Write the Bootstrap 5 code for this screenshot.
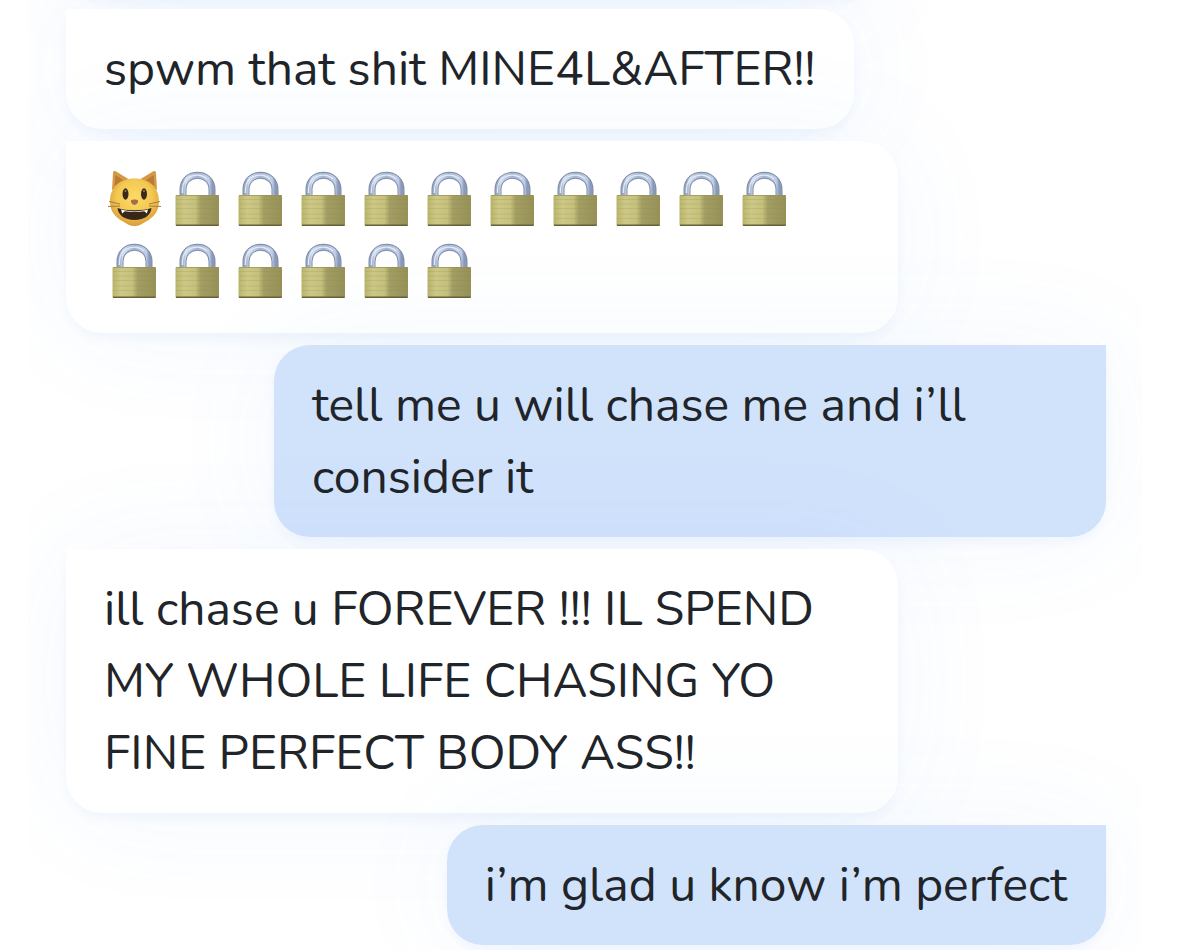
<!DOCTYPE html>
<html lang="en">
<head>
<meta charset="utf-8">
<meta name="viewport" content="width=device-width, initial-scale=1">
<title>Chat</title>
<link href="https://cdn.jsdelivr.net/npm/bootstrap@5.3.0/dist/css/bootstrap.min.css" rel="stylesheet">
<style>
body { background: #fff; color: #212529; font-family: Nunito, Lato, sans-serif; font-size: 48px; line-height: 72px; }
.chat-view { margin: 0 50px 0 28px; padding: 0 36px 0 38px; overflow: hidden; min-height: 100vh; }
.chat-log { gap: 12px; }
.bubble {
  max-width: 80%;
  padding: 24px 39px 24px 38px;
  border-radius: 36px;
  box-shadow: 0 6px 12px rgba(70, 130, 230, .06), 0 0 120px rgba(70, 130, 240, .06);
}
.bubble-in { background: #fff; border-top-left-radius: 0; }
.bubble-out { background: #d1e2fb; border-top-right-radius: 0; }
/* the end of an earlier message, scrolled out of view */
.bubble-past { width: 78%; height: 90px; margin-top: -93px; }
.emoji { width: 63px; height: 72px; flex: none; }
</style>
</head>
<body>
<svg width="0" height="0" class="position-absolute" aria-hidden="true">
  <defs>
    <linearGradient id="brass"><stop offset="0" stop-color="#bab56c"/><stop offset=".2" stop-color="#cdc885"/><stop offset=".46" stop-color="#c5c07c"/><stop offset=".58" stop-color="#a39e63"/><stop offset="1" stop-color="#979157"/></linearGradient>
    <linearGradient id="steel"><stop offset="0" stop-color="#9aa9c6"/><stop offset=".1" stop-color="#d3dff3"/><stop offset=".5" stop-color="#a3b4d3"/><stop offset=".9" stop-color="#c3d1eb"/><stop offset="1" stop-color="#8a9abb"/></linearGradient>
    <radialGradient id="fur" cx=".5" cy=".4" r=".6"><stop offset="0" stop-color="#fbdb68"/><stop offset=".6" stop-color="#f3c952"/><stop offset="1" stop-color="#d99b3a"/></radialGradient>
    <symbol id="lock" viewBox="0 0 63 72">
      <path d="M16 31V24.500C16 5.500 45 5.500 45 24.500V31" fill="none" stroke="#808ca3" stroke-width="7"/>
      <path d="M16 31V24.500C16 5.500 45 5.500 45 24.500V31" fill="none" stroke="url(#steel)" stroke-width="5"/>
      <path d="M15.500 28V24.500C15.500 9 34 7 40 14" fill="none" stroke="#e3ebf9" stroke-width="1.300"/>
      <rect x="8.500" y="30" width="43.500" height="31" rx="1" fill="url(#brass)"/>
      <path d="M9 34.500h42M9 39h42M9 43.500h42M9 49h42M9 53.500h42" stroke="#8d8545" stroke-opacity=".2"/>
      <path d="M9 30.500h42.500" stroke="#999252" stroke-opacity=".7"/>
      <path d="M9 60.200h42.500" stroke="#686036" stroke-width="1.500"/>
    </symbol>
    <symbol id="cat" viewBox="0 0 63 72">
      <path d="M8 25 9 8c0-2 2-2.500 3.500-1.300L26 15zM53 25 52 8c0-2-2-2.500-3.500-1.300L35 15z" fill="#d49a43"/>
      <path d="M10.500 21 11.500 10 20 16zM50.500 21 49.500 10 41 16z" fill="#b97b35"/>
      <path d="M30.500 13.500c15 0 24.500 9 24.500 23 0 10-5.500 16-13 20-4 2.500-7 4.500-11.500 4.500s-7.500-2-11.500-4.500c-7.500-4-13-10-13-20 0-14 9.500-23 24.500-23z" fill="url(#fur)"/>
      <path d="M16 39 5 36.500M16 41 4 41.500M45 39l11-2.500M45 41l12 .500" stroke="#9b7440" stroke-width=".9" fill="none"/>
      <ellipse cx="21.500" cy="29" rx="3" ry="5.800" fill="#3b2a1c"/><ellipse cx="40" cy="29" rx="3" ry="5.800" fill="#3b2a1c"/>
      <circle cx="21.500" cy="26" r="1" fill="#997957"/><circle cx="40" cy="26" r="1" fill="#997957"/>
      <path d="M27 35.500c1.500-1.300 5.500-1.300 7 0 .8 1.300-1.700 4.500-3.500 4.500s-4.300-3.200-3.500-4.500z" fill="#a86b45"/>
      <path d="M13.500 43c8 3 26 3 34 0-.5 7-7 12-17 12s-16.500-5-17-12z" fill="#382619"/>
      <path d="M17 44.500c8 2.200 19 2.200 27 0L42.800 48.500l-2.500-2.300c-6 .8-13 .8-19.500 0l-2.500 2.300z" fill="#fff"/>
    </symbol>
  </defs>
</svg>
<main class="chat-view">
  <div class="chat-log d-flex flex-column align-items-start">
    <div class="bubble bubble-in bubble-past" aria-hidden="true"></div>
    <div class="bubble bubble-in">spwm that shit MINE4L&amp;AFTER!!</div>
    <div class="bubble bubble-in d-flex flex-wrap" role="img" aria-label="Grinning cat and sixteen locks">
      <svg class="emoji"><use href="#cat"/></svg>
      <svg class="emoji"><use href="#lock"/></svg>
      <svg class="emoji"><use href="#lock"/></svg>
      <svg class="emoji"><use href="#lock"/></svg>
      <svg class="emoji"><use href="#lock"/></svg>
      <svg class="emoji"><use href="#lock"/></svg>
      <svg class="emoji"><use href="#lock"/></svg>
      <svg class="emoji"><use href="#lock"/></svg>
      <svg class="emoji"><use href="#lock"/></svg>
      <svg class="emoji"><use href="#lock"/></svg>
      <svg class="emoji"><use href="#lock"/></svg>
      <svg class="emoji"><use href="#lock"/></svg>
      <svg class="emoji"><use href="#lock"/></svg>
      <svg class="emoji"><use href="#lock"/></svg>
      <svg class="emoji"><use href="#lock"/></svg>
      <svg class="emoji"><use href="#lock"/></svg>
      <svg class="emoji"><use href="#lock"/></svg>
    </div>
    <div class="bubble bubble-out align-self-end">tell me u will chase me and i’ll consider it</div>
    <div class="bubble bubble-in">ill chase u FOREVER !!! IL SPEND MY WHOLE LIFE CHASING YO FINE PERFECT BODY ASS!!</div>
    <div class="bubble bubble-out align-self-end">i’m glad u know i’m perfect</div>
  </div>
</main>
<script src="https://cdn.jsdelivr.net/npm/bootstrap@5.3.0/dist/js/bootstrap.bundle.min.js"></script>
</body>
</html>
